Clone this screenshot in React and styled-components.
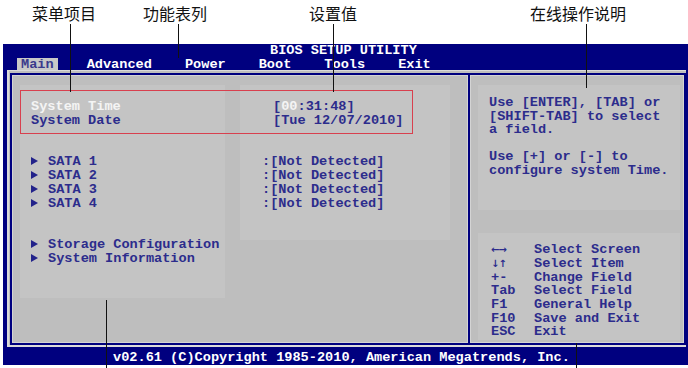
import React from 'react';
import styled, { createGlobalStyle } from 'styled-components';

const GlobalStyle = createGlobalStyle`
  html, body {
    margin: 0;
    padding: 0;
    background: #ffffff;
  }
`;

const NAVY = '#00007f';
const INK = '#2c2c8c';
const GRAY = '#bebebe';
const GHOST = '#c4c4c4';
const MONO = `"Liberation Mono", "DejaVu Sans Mono", monospace`;

const Page = styled.div`
  position: relative;
  width: 688px;
  height: 368px;
  background: #ffffff;
  overflow: hidden;
`;

const Header = styled.div`
  height: 44px;
`;

const Callout = styled.span`
  position: absolute;
  top: 3px;
  left: ${p => p.$x}px;
  font-family: "Noto Sans CJK SC", "Noto Sans", sans-serif;
  font-size: 16px;
  line-height: 20px;
  color: #111111;
`;

const Leader = styled.div`
  position: absolute;
  left: ${p => p.$x}px;
  top: ${p => p.$top}px;
  width: 1px;
  height: ${p => p.$height}px;
  background: #111111;
  z-index: 2;
`;

const Screen = styled.div`
  width: 685px;
  margin-left: 3px;
  height: 321px;
  background: ${NAVY};
  font-family: ${MONO};
  font-size: 13.6px;
  font-weight: bold;
  display: flex;
  flex-direction: column;
`;

const Title = styled.div`
  height: 13px;
  line-height: 14px;
  padding-left: 267px;
  color: #ffffff;
  white-space: pre;
`;

const MenuBar = styled.div`
  display: flex;
  gap: 25px;
  height: 12px;
  margin-top: 1px;
  padding-left: 14px;
`;

const MenuItem = styled.span`
  padding: 0 4px;
  height: 12px;
  line-height: 14px;
  color: ${p => (p.$active ? '#3a3a8c' : '#ffffff')};
  background: ${p => (p.$active ? '#c8c8c8' : 'transparent')};
`;

const Body = styled.div`
  margin: 0 2px 0 4px;
  height: 277px;
  box-sizing: border-box;
  background: ${GRAY};
  border-top: 1px solid #dadada;
  border-left: 2px solid #dadada;
  border-bottom: 2px solid #dadada;
  padding: 2px 0 0 1px;
`;

const Frame = styled.div`
  display: flex;
  height: 272px;
  box-sizing: border-box;
  border: 2px solid ${NAVY};
`;

const LeftPanel = styled.div`
  width: 456px;
  box-shadow: inset 0 0 0 1px #d4d4d4;
  background:
    linear-gradient(${GHOST}, ${GHOST}) 8px 10px / 205px 213px no-repeat,
    linear-gradient(${GHOST}, ${GHOST}) 228px 10px / 210px 155px no-repeat,
    ${GRAY};
  padding-top: 15px;
  box-sizing: border-box;
  display: flex;
  flex-direction: column;
`;

const RightPanel = styled.div`
  width: 216px;
  box-sizing: border-box;
  border-left: 2px solid ${NAVY};
  box-shadow: inset 0 0 0 1px #d4d4d4;
  background:
    linear-gradient(${GHOST}, ${GHOST}) 8px 10px / 202px 125px no-repeat,
    linear-gradient(${GHOST}, ${GHOST}) 8px 158px / 202px 107px no-repeat,
    ${GRAY};
  padding: 21px 0 4px 19px;
  display: flex;
  flex-direction: column;
  color: ${INK};
`;

const SelectBox = styled.div`
  width: 393px;
  margin-left: 8px;
  box-sizing: border-box;
  border: 1px solid #d8404e;
  padding: 9px 10px 5px;
`;

const Row = styled.div`
  display: flex;
  height: 14px;
  line-height: 14px;
  white-space: pre;
  color: ${INK};
`;

const Label = styled.span`
  width: ${p => p.$w}px;
  flex: none;
  color: ${p => (p.$selected ? '#f4f4f4' : INK)};
`;

const Hi = styled.span`
  color: #f4f4f4;
`;

const Group = styled.div`
  margin-top: ${p => p.$gap}px;
  padding-left: 19px;
`;

const Arrow = styled.span`
  flex: none;
  width: 0;
  height: 0;
  margin: 2px 10px 0 0;
  border-left: 7px solid #22228a;
  border-top: 4.5px solid transparent;
  border-bottom: 4.5px solid transparent;
`;

const HelpText = styled.div`
  line-height: 13.6px;
  white-space: pre;
`;

const KeyList = styled.div`
  margin-top: auto;
  padding-left: 2px;
`;

const KeyRow = styled.div`
  display: flex;
  height: 13.7px;
  line-height: 13.7px;
  white-space: pre;
`;

const Key = styled.span`
  width: 43px;
  flex: none;
  font-size: ${p => (p.$glyph ? '10px' : 'inherit')};
  font-family: ${p => (p.$glyph ? `"DejaVu Sans", sans-serif` : 'inherit')};
  letter-spacing: ${p => (p.$glyph ? '-1px' : 'normal')};
`;

const Footer = styled.div`
  height: 18px;
  box-sizing: border-box;
  padding: 2px 0 0 110px;
  line-height: 18px;
  color: #ffffff;
  white-space: pre;
`;

const menu = ['Main', 'Advanced', 'Power', 'Boot', 'Tools', 'Exit'];
const drives = ['SATA 1', 'SATA 2', 'SATA 3', 'SATA 4'];
const keys = [
  ['←→', 'Select Screen', true],
  ['↓↑', 'Select Item', true],
  ['+-', 'Change Field'],
  ['Tab', 'Select Field'],
  ['F1', 'General Help'],
  ['F10', 'Save and Exit'],
  ['ESC', 'Exit'],
];

const App = () => {
  return (
    <Page>
      <GlobalStyle />
      <Header>
        <Callout $x={32}>菜单项目</Callout>
        <Callout $x={143}>功能表列</Callout>
        <Callout $x={309}>设置值</Callout>
        <Callout $x={530}>在线操作说明</Callout>
      </Header>

      <Leader $x={70} $top={24} $height={68} />
      <Leader $x={178} $top={24} $height={34} />
      <Leader $x={333} $top={24} $height={68} />
      <Leader $x={586} $top={24} $height={64} />
      <Leader $x={106} $top={300} $height={68} />
      <Leader $x={576} $top={343} $height={25} />

      <Screen>
        <Title>BIOS SETUP UTILITY</Title>
        <MenuBar>
          {menu.map((m, i) => (
            <MenuItem key={m} $active={i === 0}>{m}</MenuItem>
          ))}
        </MenuBar>

        <Body>
          <Frame>
            <LeftPanel>
              <SelectBox>
                <Row>
                  <Label $w={242} $selected>System Time</Label>
                  <span>[<Hi>00</Hi>:31:48]</span>
                </Row>
                <Row>
                  <Label $w={242}>System Date</Label>
                  <span>[Tue 12/07/2010]</span>
                </Row>
              </SelectBox>

              <Group $gap={21}>
                {drives.map(d => (
                  <Row key={d}>
                    <Arrow />
                    <Label $w={214}>{d}</Label>
                    <span>:[Not Detected]</span>
                  </Row>
                ))}
              </Group>

              <Group $gap={27}>
                <Row>
                  <Arrow />
                  <span>Storage Configuration</span>
                </Row>
                <Row>
                  <Arrow />
                  <span>System Information</span>
                </Row>
              </Group>
            </LeftPanel>

            <RightPanel>
              <HelpText>
                {'Use [ENTER], [TAB] or\n[SHIFT-TAB] to select\na field.\n\nUse [+] or [-] to\nconfigure system Time.'}
              </HelpText>
              <KeyList>
                {keys.map(([k, desc, glyph]) => (
                  <KeyRow key={desc}>
                    <Key $glyph={glyph}>{k}</Key>
                    <span>{desc}</span>
                  </KeyRow>
                ))}
              </KeyList>
            </RightPanel>
          </Frame>
        </Body>

        <Footer>v02.61 (C)Copyright 1985-2010, American Megatrends, Inc.</Footer>
      </Screen>
    </Page>
  );
};

export default App;
